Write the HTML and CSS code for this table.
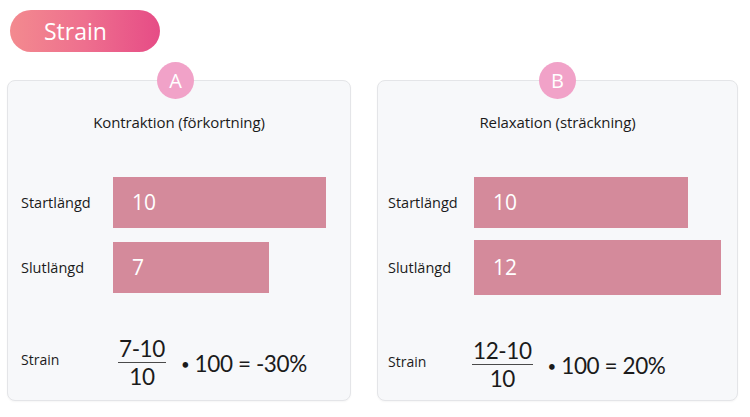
FILE: index.html
```html
<!DOCTYPE html>
<html lang="sv">
<head>
<meta charset="utf-8">
<title>Strain</title>
<link rel="stylesheet" href="styles.css">
</head>
<body>
<div class="page">
  <div class="pill">Strain</div>
  <div class="cards">
    <section class="card card--a">
      <div class="badge">A</div>
      <h2 class="card-title">Kontraktion (förkortning)</h2>
      <div class="rows">
        <div class="label">Startlängd</div>
        <div class="bar" style="width:213px">10</div>
        <div class="label">Slutlängd</div>
        <div class="bar" style="width:156px">7</div>
      </div>
      <div class="formula">
        <div class="label">Strain</div>
        <div class="expr">
          <div class="frac"><span class="num">7-10</span><span class="den">10</span></div>
          <span class="rest"><span class="dot">•</span> 100 = -30%</span>
        </div>
      </div>
    </section>
    <section class="card card--b">
      <div class="badge">B</div>
      <h2 class="card-title">Relaxation (sträckning)</h2>
      <div class="rows">
        <div class="label">Startlängd</div>
        <div class="bar" style="width:214px">10</div>
        <div class="label">Slutlängd</div>
        <div class="bar bar--tall" style="width:247px">12</div>
      </div>
      <div class="formula">
        <div class="label">Strain</div>
        <div class="expr">
          <div class="frac"><span class="num">12-10</span><span class="den">10</span></div>
          <span class="rest"><span class="dot">•</span> 100 = 20%</span>
        </div>
      </div>
    </section>
  </div>
</div>
</body>
</html>
```
FILE: styles.css
```css
* { box-sizing: border-box; }
html, body { margin: 0; padding: 0; background: #ffffff; }
body {
  font-family: "Open Sans", "Noto Sans", sans-serif;
  color: #1b1b1b;
  width: 750px;
  height: 417px;
  overflow: hidden;
}
.page {
  padding: 10px 0 0 7px;
  display: flex;
  flex-direction: column;
}
.pill {
  margin-left: 3px;
  width: 150px;
  height: 42px;
  border-radius: 21px;
  background: linear-gradient(90deg, #f38a8f 0%, #ee6f8e 50%, #e64c86 100%);
  color: #ffffff;
  font-size: 23px;
  line-height: 42px;
  padding-left: 34px;
}
.cards {
  margin-top: 28px;
  display: grid;
  grid-template-columns: 344px 361px;
  column-gap: 26px;
}
.card {
  position: relative;
  height: 321px;
  background: #f7f8fa;
  border: 1px solid #e4e5e8;
  border-radius: 8px;
  padding: 31px 0 0 13px;
  box-shadow: 0 1px 2px rgba(0,0,0,0.04);
}
.card--b { padding-left: 10px; }
.badge {
  position: absolute;
  top: -19px;
  left: 149px;
  width: 37px;
  height: 37px;
  border-radius: 50%;
  background: #f1a2c8;
  color: #ffffff;
  font-size: 20px;
  line-height: 37px;
  text-align: center;
}
.card--b .badge { left: 161px; }
.card-title {
  margin: 0;
  font-weight: 400;
  font-size: 15px;
  line-height: 20px;
  text-align: center;
  padding-right: 13px;
  letter-spacing: -0.1px;
}
.card--b .card-title { padding-right: 10px; }
.rows {
  margin-top: 45px;
  display: grid;
  grid-template-columns: 92px 1fr;
  row-gap: 14px;
  align-items: center;
}
.card--b .rows { grid-template-columns: 86px 1fr; row-gap: 12px; }
.label {
  font-size: 14.5px;
  line-height: 20px;
}
.bar {
  height: 51px;
  background: #d48a9b;
  color: #ffffff;
  font-size: 21px;
  line-height: 51px;
  padding-left: 19px;
}
.bar--tall { height: 55px; line-height: 55px; }
.formula {
  margin-top: 43px;
  display: grid;
  grid-template-columns: 92px 1fr;
  align-items: center;
}
.card--b .formula { grid-template-columns: 86px 1fr; }
.formula .label { font-size: 14px; margin-bottom: 6px; }
.expr {
  display: flex;
  align-items: center;
  padding-left: 5px;
  font-family: "Lato", "Open Sans", sans-serif;
  font-size: 22.5px;
  letter-spacing: -0.4px;
}
.card--b .expr { padding-left: 0; margin-left: -2px; }
.frac {
  display: flex;
  flex-direction: column;
  align-items: center;
}
.num {
  line-height: 25.6px;
  padding: 0 1px;
  border-bottom: 1.6px solid #4a4a4a;
}
.den {
  line-height: 27.6px;
}
.rest {
  margin-left: 15px;
}
.dot {
  font-size: 15px;
  vertical-align: 2px;
}
```
